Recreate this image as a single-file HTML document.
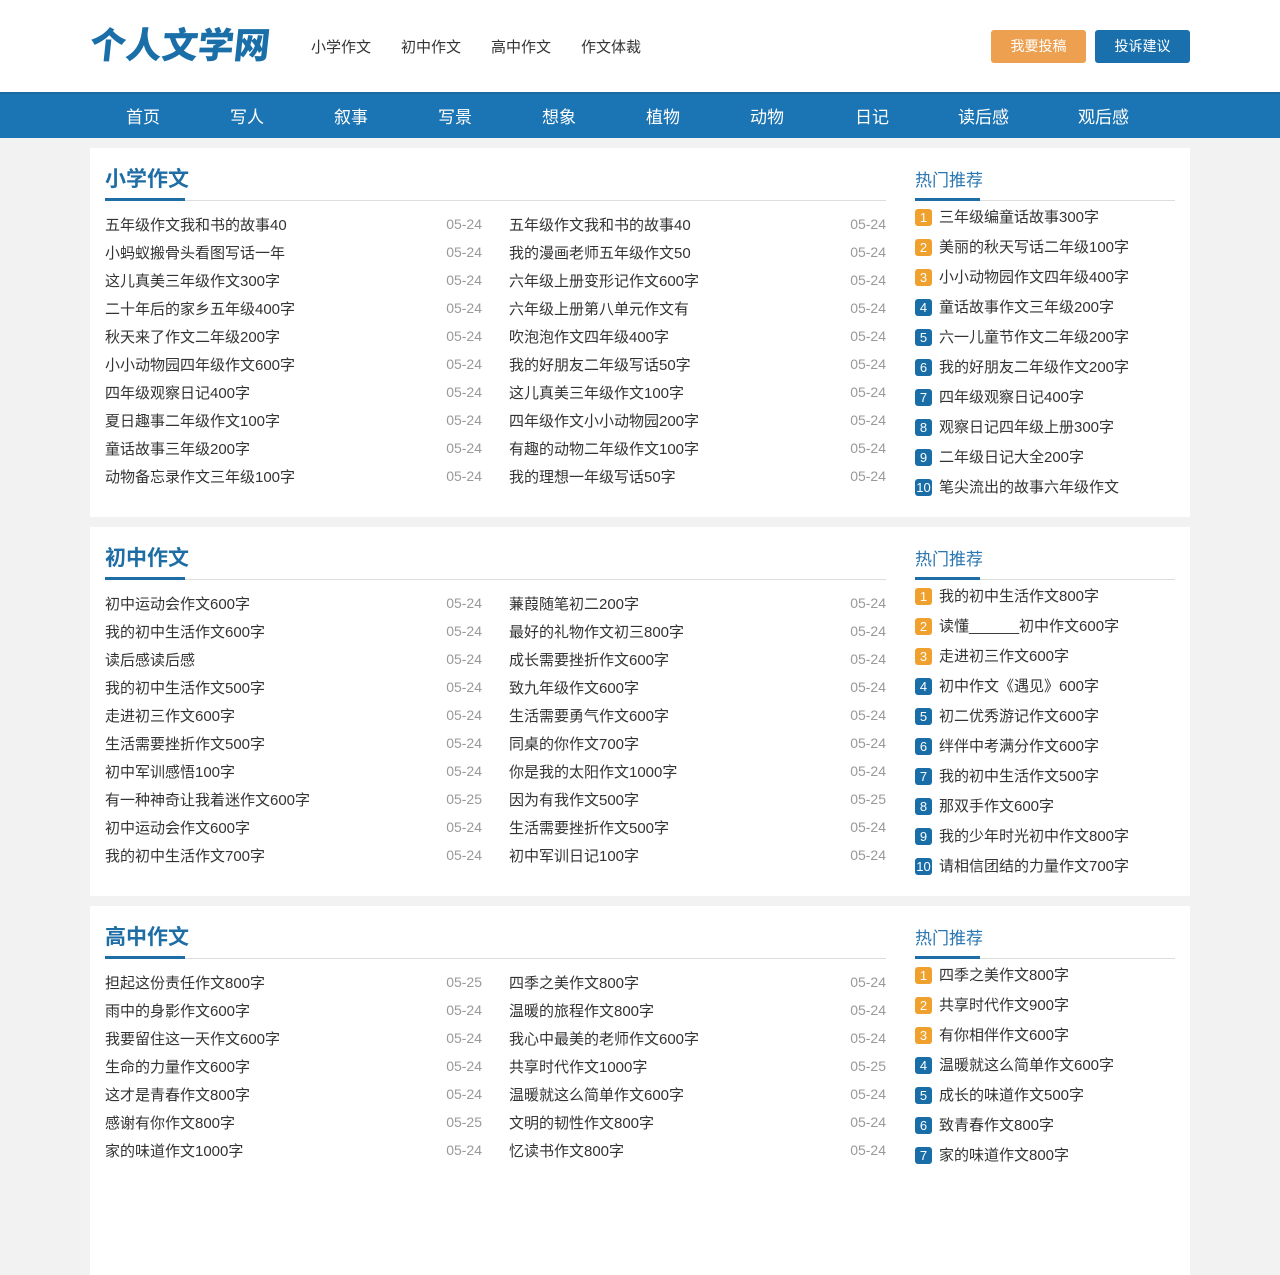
<!DOCTYPE html>
<html><head><meta charset="utf-8"><style>
*{margin:0;padding:0;box-sizing:border-box}
body{width:1280px;height:1167px;overflow:hidden;background:#f2f2f2;font-family:"Liberation Sans","Microsoft YaHei","Noto Sans CJK SC",sans-serif;color:#333;font-size:15px}
.hd{position:absolute;left:0;top:0;width:1280px;height:92px;background:#fff}
.logo{position:absolute;left:90px;top:24px;font-size:36px;font-weight:900;color:#1a6fa9;letter-spacing:0px;line-height:44px;transform:skewX(-6deg)}
.tn{position:absolute;top:36px;font-size:15px;color:#333}
.btn{position:absolute;top:30px;width:95px;height:33px;border-radius:3px;color:#fff;font-size:14px;text-align:center;line-height:33px}
.nav{position:absolute;left:0;top:92px;width:1280px;height:46px;background:#1b74b3;border-top:2px solid #1a69a0}
.nav span{position:absolute;top:9px;color:#fff;font-size:17px}
.panel{position:absolute;left:90px;width:1100px;height:369px;background:#fff}
.t{position:absolute;left:15px;top:15px;font-size:21px;font-weight:bold;color:#1e6da5}
.ln{position:absolute;left:15px;top:52px;width:781px;height:1px;background:#ddd}
.bl{position:absolute;left:15px;top:50px;width:80px;height:3px;background:#1e6da5}
.r{position:absolute;font-size:15px;color:#333;white-space:nowrap}
.d{position:absolute;font-size:14px;color:#999;text-align:right;width:60px}
.st{position:absolute;left:825px;top:18px;font-size:17px;color:#2a76b0}
.sln{position:absolute;left:825px;top:52px;width:260px;height:1px;background:#ddd}
.sbl{position:absolute;left:825px;top:50px;width:65px;height:3px;background:#1e6da5}
.b{position:absolute;left:825px;width:17px;height:17px;border-radius:3px;color:#fff;font-size:13px;text-align:center;line-height:17px}
.o{background:#f0a02c}.u{background:#1a6ea8}
.s{position:absolute;left:849px;font-size:15px;color:#333;white-space:nowrap}
</style></head><body>
<div class="hd">
<div class="logo">个人文学网</div>
<span class="tn" style="left:311px">小学作文</span>
<span class="tn" style="left:401px">初中作文</span>
<span class="tn" style="left:491px">高中作文</span>
<span class="tn" style="left:581px">作文体裁</span>
<div class="btn" style="left:991px;background:#eda04f">我要投稿</div>
<div class="btn" style="left:1095px;background:#1a6fad">投诉建议</div>
</div>
<div class="nav">
<span style="left:126px">首页</span><span style="left:230px">写人</span><span style="left:334px">叙事</span><span style="left:438px">写景</span><span style="left:542px">想象</span><span style="left:646px">植物</span><span style="left:750px">动物</span><span style="left:855px">日记</span><span style="left:958px">读后感</span><span style="left:1078px">观后感</span>
</div>
<div id="c"></div>
<script>
var P=[
{y:148,t:"小学作文",L:["五年级作文我和书的故事40","小蚂蚁搬骨头看图写话一年","这儿真美三年级作文300字","二十年后的家乡五年级400字","秋天来了作文二年级200字","小小动物园四年级作文600字","四年级观察日记400字","夏日趣事二年级作文100字","童话故事三年级200字","动物备忘录作文三年级100字"],
R:["五年级作文我和书的故事40","我的漫画老师五年级作文50","六年级上册变形记作文600字","六年级上册第八单元作文有","吹泡泡作文四年级400字","我的好朋友二年级写话50字","这儿真美三年级作文100字","四年级作文小小动物园200字","有趣的动物二年级作文100字","我的理想一年级写话50字"],
LD:[],RD:[],
S:["三年级编童话故事300字","美丽的秋天写话二年级100字","小小动物园作文四年级400字","童话故事作文三年级200字","六一儿童节作文二年级200字","我的好朋友二年级作文200字","四年级观察日记400字","观察日记四年级上册300字","二年级日记大全200字","笔尖流出的故事六年级作文"]},
{y:527,t:"初中作文",L:["初中运动会作文600字","我的初中生活作文600字","读后感读后感","我的初中生活作文500字","走进初三作文600字","生活需要挫折作文500字","初中军训感悟100字","有一种神奇让我着迷作文600字","初中运动会作文600字","我的初中生活作文700字"],
R:["蒹葭随笔初二200字","最好的礼物作文初三800字","成长需要挫折作文600字","致九年级作文600字","生活需要勇气作文600字","同桌的你作文700字","你是我的太阳作文1000字","因为有我作文500字","生活需要挫折作文500字","初中军训日记100字"],
LD:{7:"05-25"},RD:{7:"05-25"},
S:["我的初中生活作文800字","读懂______初中作文600字","走进初三作文600字","初中作文《遇见》600字","初二优秀游记作文600字","绊伴中考满分作文600字","我的初中生活作文500字","那双手作文600字","我的少年时光初中作文800字","请相信团结的力量作文700字"]},
{y:906,t:"高中作文",L:["担起这份责任作文800字","雨中的身影作文600字","我要留住这一天作文600字","生命的力量作文600字","这才是青春作文800字","感谢有你作文800字","家的味道作文1000字"],
R:["四季之美作文800字","温暖的旅程作文800字","我心中最美的老师作文600字","共享时代作文1000字","温暖就这么简单作文600字","文明的韧性作文800字","忆读书作文800字"],
LD:{0:"05-25",5:"05-25"},RD:{3:"05-25"},
S:["四季之美作文800字","共享时代作文900字","有你相伴作文600字","温暖就这么简单作文600字","成长的味道作文500字","致青春作文800字","家的味道作文800字"]}];
var h="";
P.forEach(function(p){
h+='<div class="panel" style="top:'+p.y+'px"><div class="t">'+p.t+'</div><div class="ln"></div><div class="bl"></div><div class="st">热门推荐</div><div class="sln"></div><div class="sbl"></div>';
p.L.forEach(function(x,i){var y=66+i*28;
h+='<div class="r" style="left:15px;top:'+y+'px">'+x+'</div><div class="d" style="left:332px;top:'+(y+2)+'px">'+(p.LD[i]||"05-24")+'</div>';});
p.R.forEach(function(x,i){var y=66+i*28;
h+='<div class="r" style="left:419px;top:'+y+'px">'+x+'</div><div class="d" style="left:736px;top:'+(y+2)+'px">'+(p.RD[i]||"05-24")+'</div>';});
p.S.forEach(function(x,i){var y=58+i*30;
h+='<div class="b '+(i<3?'o':'u')+'" style="top:'+(y+3)+'px">'+(i+1)+'</div><div class="s" style="top:'+y+'px">'+x+'</div>';});
h+='</div>';});
document.getElementById("c").innerHTML=h;
</script>
</body></html>
